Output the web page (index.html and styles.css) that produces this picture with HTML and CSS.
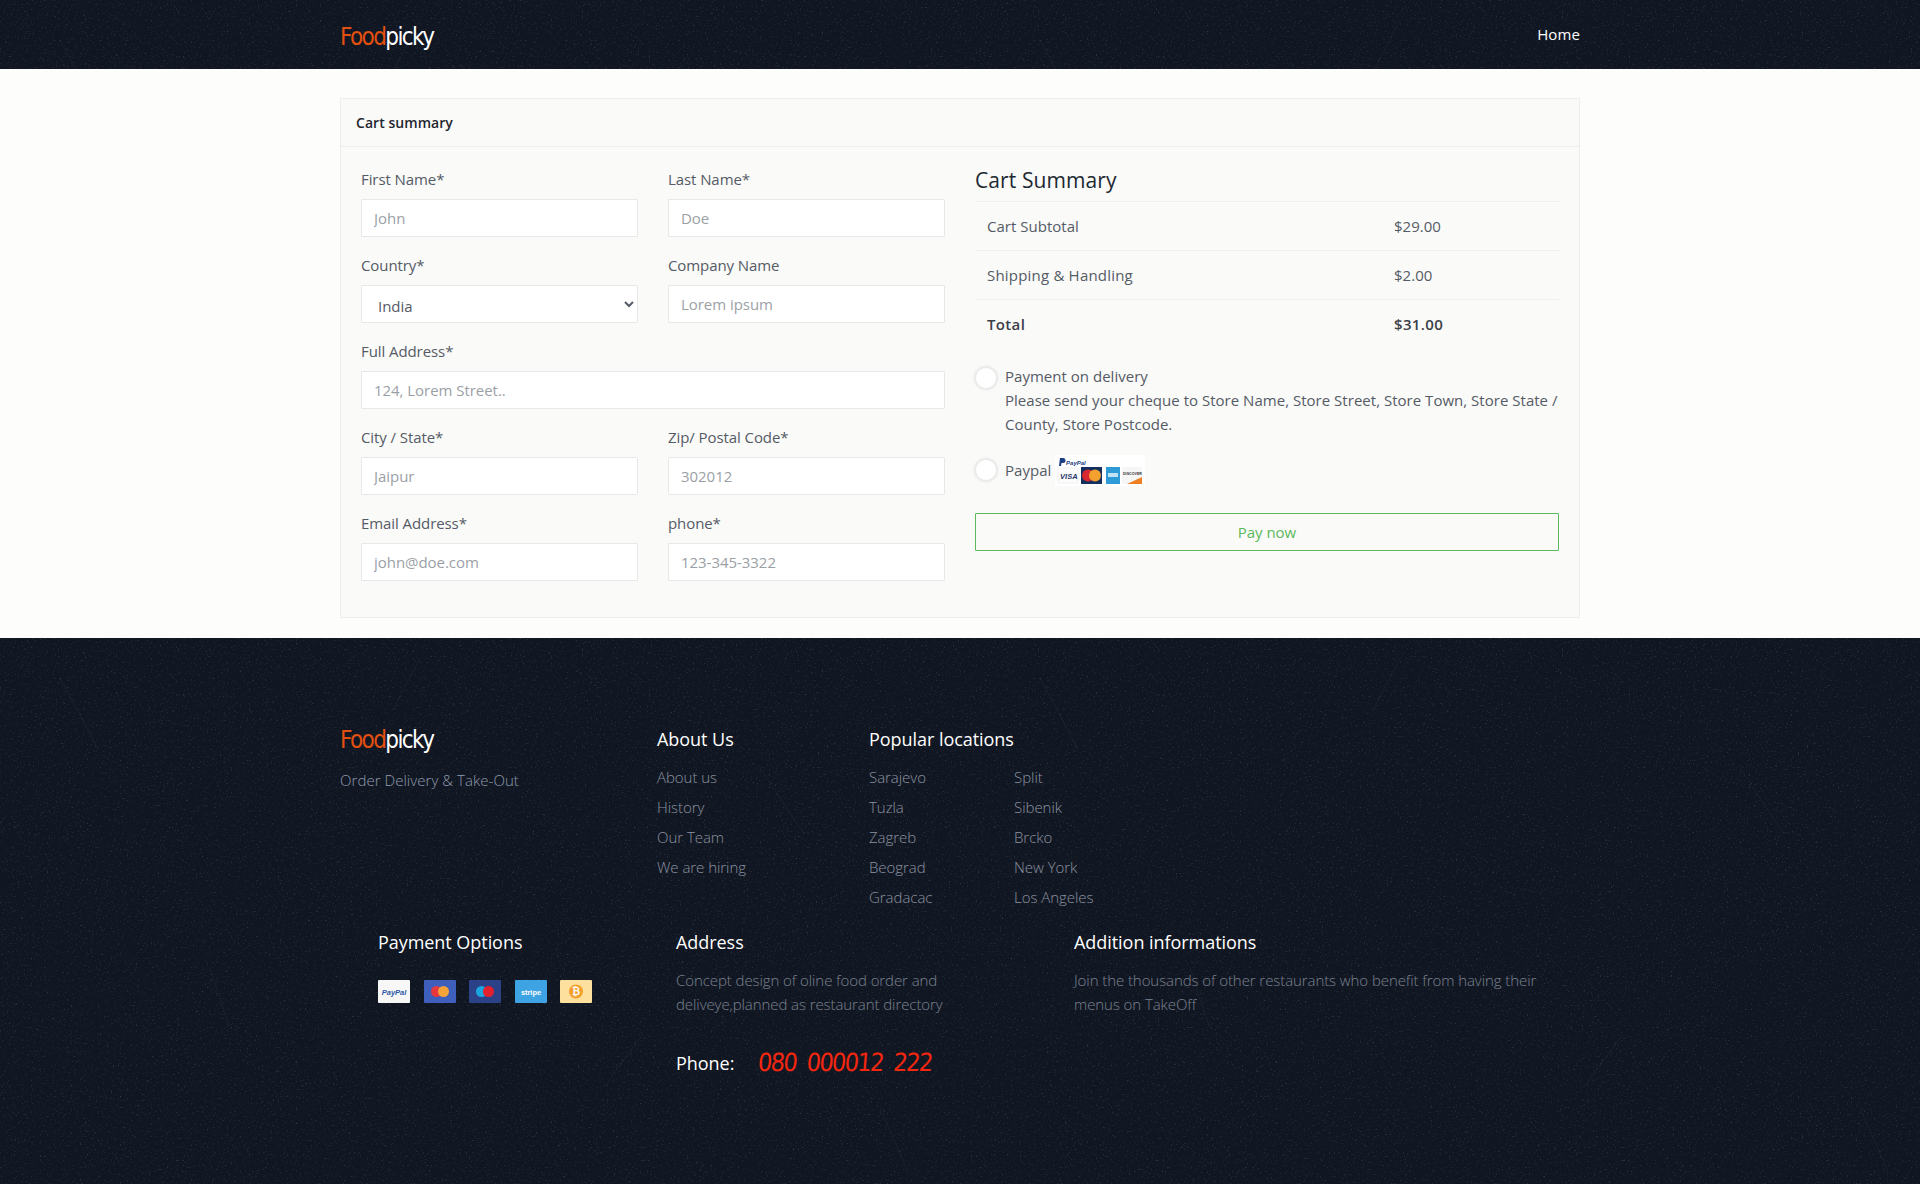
FILE: index.html
```html
<!DOCTYPE html>
<html lang="en">
    <head>
        <meta charset="UTF-8" />
        <meta name="viewport" content="width=device-width, initial-scale=1.0" />
        <title>Foodpicky - Checkout</title>
        <link rel="stylesheet" href="styles.css">
    </head>
    <body>
        <header class="top-bar dark">
            <div class="container top-row">
                <a class="logo" href="#"><span class="logo-food">Food</span><span class="logo-picky">picky</span></a>
                <a class="nav-link" href="#">Home</a>
            </div>
        </header>

        <main class="main">
            <div class="container">
                <div class="card">
                    <div class="card-header">Cart summary</div>
                    <div class="card-body">
                        <form class="form-grid">
                            <div class="field">
                                <label>First Name*</label>
                                <input type="text" placeholder="John">
                            </div>
                            <div class="field">
                                <label>Last Name*</label>
                                <input type="text" placeholder="Doe">
                            </div>
                            <div class="field">
                                <label>Country*</label>
                                <select>
                                    <option>India</option>
                                </select>
                            </div>
                            <div class="field">
                                <label>Company Name</label>
                                <input type="text" placeholder="Lorem ipsum">
                            </div>
                            <div class="field field-wide">
                                <label>Full Address*</label>
                                <input type="text" placeholder="124, Lorem Street..">
                            </div>
                            <div class="field">
                                <label>City / State*</label>
                                <input type="text" placeholder="Jaipur">
                            </div>
                            <div class="field">
                                <label>Zip/ Postal Code*</label>
                                <input type="text" placeholder="302012">
                            </div>
                            <div class="field">
                                <label>Email Address*</label>
                                <input type="text" placeholder="john@doe.com">
                            </div>
                            <div class="field">
                                <label>phone*</label>
                                <input type="text" placeholder="123-345-3322">
                            </div>
                        </form>

                        <div class="summary">
                            <h3 class="summary-title">Cart Summary</h3>
                            <table class="summary-table">
                                <tr>
                                    <td>Cart Subtotal</td>
                                    <td>$29.00</td>
                                </tr>
                                <tr>
                                    <td>Shipping &amp; Handling</td>
                                    <td>$2.00</td>
                                </tr>
                                <tr class="total">
                                    <td>Total</td>
                                    <td>$31.00</td>
                                </tr>
                            </table>

                            <div class="pay-option pay-delivery">
                                <span class="radio"></span>
                                <p>Payment on delivery<br>Please send your cheque to Store Name, Store Street, Store Town, Store State / County, Store Postcode.</p>
                            </div>
                            <div class="pay-option pay-paypal">
                                <span class="radio"></span>
                                <span>Paypal</span>
                                <svg class="paypal-cards" width="90" height="31" viewBox="0 0 90 31">
                                    <rect width="90" height="31" fill="#fff"/>
                                    <path d="M5 3h3a2 2 0 0 1 0 5H6.500L6 11H4z" fill="#1b3d84"/>
                                    <text x="11" y="9.500" class="pp-small">PayPal</text>
                                    <rect x="3" y="13" width="20" height="15" fill="#fdfdfd" stroke="#e2e2e2" stroke-width=".5"/>
                                    <text x="5" y="24" class="pp-visa">VISA</text>
                                    <rect x="26" y="12" width="21" height="17" fill="#15305f"/>
                                    <circle cx="33" cy="20.500" r="6" fill="#d9282f"/>
                                    <circle cx="40" cy="20.500" r="6" fill="#f3a02f"/>
                                    <rect x="51" y="12" width="14" height="17" fill="#2f9bd6"/>
                                    <rect x="53" y="18" width="10" height="4" fill="#bfe3f5"/>
                                    <rect x="67" y="12" width="20" height="17" fill="#f6f6f6"/>
                                    <text x="68" y="20" class="pp-disc">DISCOVER</text>
                                    <path d="M72 29 L87 22 V29 Z" fill="#ee7f22"/>
                                </svg>
                            </div>
                            <button class="pay-button" type="button">Pay now</button>
                        </div>
                    </div>
                </div>
            </div>
        </main>

        <footer class="footer dark">
            <div class="container">
                <div class="footer-row">
                    <div class="footer-brand">
                        <a class="logo" href="#"><span class="logo-food">Food</span><span class="logo-picky">picky</span></a>
                        <p class="tagline">Order Delivery &amp; Take-Out</p>
                    </div>
                    <div class="footer-about">
                        <h5>About Us</h5>
                        <ul>
                            <li><a href="#">About us</a></li>
                            <li><a href="#">History</a></li>
                            <li><a href="#">Our Team</a></li>
                            <li><a href="#">We are hiring</a></li>
                        </ul>
                    </div>
                    <div class="footer-places">
                        <h5>Popular locations</h5>
                        <div class="places-cols">
                            <ul>
                                <li><a href="#">Sarajevo</a></li>
                                <li><a href="#">Tuzla</a></li>
                                <li><a href="#">Zagreb</a></li>
                                <li><a href="#">Beograd</a></li>
                                <li><a href="#">Gradacac</a></li>
                            </ul>
                            <ul>
                                <li><a href="#">Split</a></li>
                                <li><a href="#">Sibenik</a></li>
                                <li><a href="#">Brcko</a></li>
                                <li><a href="#">New York</a></li>
                                <li><a href="#">Los Angeles</a></li>
                            </ul>
                        </div>
                    </div>
                </div>

                <div class="footer-row footer-second">
                    <div class="footer-pay">
                        <h5>Payment Options</h5>
                        <div class="pay-icons">
                            <svg width="32" height="23" viewBox="0 0 32 23">
                                <rect width="32" height="23" rx="1" fill="#f7f7f7"/>
                                <text x="16" y="14.500" class="ic-paypal">PayPal</text>
                            </svg>
                            <svg width="32" height="23" viewBox="0 0 32 23">
                                <rect width="32" height="23" rx="1" fill="#3f5fbd"/>
                                <circle cx="12.500" cy="11.500" r="5.500" fill="#e7383f"/>
                                <circle cx="19.500" cy="11.500" r="5.500" fill="#f6a339"/>
                            </svg>
                            <svg width="32" height="23" viewBox="0 0 32 23">
                                <rect width="32" height="23" rx="1" fill="#2c4288"/>
                                <circle cx="12.500" cy="11.500" r="5.500" fill="#1ba6e2"/>
                                <circle cx="19.500" cy="11.500" r="5.500" fill="#e4202d"/>
                            </svg>
                            <svg width="32" height="23" viewBox="0 0 32 23">
                                <rect width="32" height="23" rx="1" fill="#3ea3e3"/>
                                <text x="16" y="14.500" class="ic-stripe">stripe</text>
                            </svg>
                            <svg width="32" height="23" viewBox="0 0 32 23">
                                <rect width="32" height="23" rx="1" fill="#fddf9e"/>
                                <circle cx="16" cy="11.500" r="7" fill="#f5a02c"/>
                                <text x="16" y="15" class="ic-btc">₿</text>
                            </svg>
                        </div>
                    </div>
                    <div class="footer-address">
                        <h5>Address</h5>
                        <p>Concept design of oline food order and deliveye,planned as restaurant directory</p>
                        <div class="phone">
                            <span class="phone-label">Phone:</span>
                            <span class="phone-number">080 000012 222</span>
                        </div>
                    </div>
                    <div class="footer-info">
                        <h5>Addition informations</h5>
                        <p>Join the thousands of other restaurants who benefit from having their menus on TakeOff</p>
                    </div>
                </div>
            </div>
        </footer>
    </body>
</html>
```

FILE: styles.css
```css
* {
    box-sizing: border-box;
}
body {
    margin: 0;
    font-family: "Open Sans", "Noto Sans", sans-serif;
    font-size: 15px;
    line-height: 24px;
    letter-spacing: -0.04px;
    color: #555b66;
    background-color: #fdfdfb;
}
a {
    text-decoration: none;
    color: inherit;
}
ul {
    list-style: none;
    margin: 0;
    padding: 0;
}
p {
    margin: 0;
}
.container {
    width: 1240px;
    margin: 0 auto;
}

/* dark textured bars */
.dark {
    background-color: #111722;
    background-image: url("data:image/svg+xml,%3Csvg xmlns='http://www.w3.org/2000/svg' width='980' height='620'%3E%3Cfilter id='n'%3E%3CfeTurbulence type='fractalNoise' baseFrequency='.55' numOctaves='4' seed='11'/%3E%3CfeColorMatrix values='0 0 0 0 1 0 0 0 0 1 0 0 0 0 1 0 0 0 4 -2.5'/%3E%3C/filter%3E%3Crect width='980' height='620' filter='url(%23n)' opacity='.12'/%3E%3Cg stroke='%23fff' stroke-opacity='.035' fill='none'%3E%3Cpath d='M60 40l38 71M420 20l-27 52M760 130l44 66M210 330l19 58M640 400l-36 49M880 470l27 61'/%3E%3C/g%3E%3C/svg%3E");
}

/* header */
.top-bar {
    height: 69px;
}
.top-row {
    display: flex;
    justify-content: space-between;
    align-items: center;
    height: 69px;
}
.logo {
    display: block;
    width: 93px;
    height: 26px;
    line-height: 26px;
    font-family: "DejaVu Sans Condensed", "DejaVu Sans", sans-serif;
    font-size: 24px;
    letter-spacing: -1.6px;
    white-space: nowrap;
}
.top-row .logo {
    margin-top: 4px;
}
.logo-food {
    color: #e4500f;
}
.logo-picky {
    color: #fff;
}
.nav-link {
    margin-top: -1px;
    color: #fff;
    font-size: 15px;
    font-weight: 500;
    letter-spacing: 0.1px;
}

/* main card */
.main {
    padding: 29px 0 20px 0;
}
.card {
    border: 1px solid #eeeeec;
    background-color: #fafaf8;
}
.card-header {
    height: 48px;
    padding: 0 15px;
    border-bottom: 1px solid #eeeeec;
    font-size: 14px;
    font-weight: 600;
    line-height: 47px;
    letter-spacing: 0.05px;
    color: #1f2630;
}
.card-body {
    display: flex;
    gap: 30px;
    padding: 20px 20px 20px 20px;
}
.form-grid {
    display: grid;
    grid-template-columns: 1fr 1fr;
    column-gap: 30px;
    width: 584px;
}
.field {
    height: 86px;
}
.field-wide {
    grid-column: 1 / 3;
}
.field label {
    display: block;
    margin-bottom: 8px;
    height: 24px;
    letter-spacing: -0.08px;
}
.field input,
.field select {
    display: block;
    width: 100%;
    height: 38px;
    padding: 0 12px;
    border: 1px solid #e8e8e8;
    border-radius: 1px;
    background-color: #fff;
    font-family: inherit;
    font-size: 15px;
    letter-spacing: -0.04px;
    color: #555b66;
}
.field select {
    padding-top: 3px;
}
.field input::placeholder {
    color: #9b9fa6;
    opacity: 1;
}

/* summary column */
.summary {
    width: 584px;
    letter-spacing: 0.02px;
}
.summary-title {
    margin: 0;
    height: 34px;
    font-size: 21px;
    font-weight: 400;
    line-height: 26px;
    letter-spacing: 0.1px;
    color: #212832;
}
.summary-table {
    width: 100%;
    border-collapse: collapse;
}
.summary-table td {
    height: 49px;
    padding: 0 12px;
    border-top: 1px solid #eeeff0;
}
.summary-table tr:nth-child(2) td:first-child {
    letter-spacing: 0.2px;
}
.summary-table td:first-child {
    width: 407px;
}
.total td {
    font-weight: 600;
    letter-spacing: 0.35px;
    color: #3b4049;
}
.pay-option {
    display: flex;
    gap: 8px;
}
.pay-delivery {
    margin-top: 15px;
}
.pay-delivery .radio {
    margin-top: 3px;
}
.pay-paypal {
    align-items: center;
    margin-top: 19px;
}
.radio {
    flex: none;
    width: 22px;
    height: 22px;
    border: 1px solid #ececec;
    border-radius: 50%;
    background-color: #fff;
    box-shadow: 0 0 2px 1px #e6e6e6;
}
.paypal-cards {
    margin-left: -4px;
}
.pp-small {
    font: italic 700 6px "Liberation Sans", sans-serif;
    fill: #1b3d84;
}
.pp-visa {
    font: italic 700 7.5px "Liberation Sans", sans-serif;
    fill: #27346a;
}
.pp-disc {
    font: 700 3.6px "Liberation Sans", sans-serif;
    fill: #333;
}
.pay-button {
    display: block;
    width: 100%;
    height: 38px;
    margin-top: 27px;
    border: 1px solid #5cb85c;
    border-radius: 1px;
    background: transparent;
    font-family: inherit;
    font-size: 15px;
    letter-spacing: -0.04px;
    color: #5cb85c;
}

/* footer */
.footer {
    height: 546px;
    padding-top: 89px;
    font-weight: 300;
    color: #8b92a1;
}
.footer h5 {
    margin: 0;
    height: 26px;
    font-size: 18px;
    font-weight: 400;
    line-height: 25px;
    letter-spacing: -0.05px;
    color: #fff;
}
.footer-row {
    display: flex;
}
.footer-brand {
    width: 317px;
}
.tagline {
    margin-top: 15px;
    color: #8f99ae;
    letter-spacing: 0.05px;
}
.footer-about {
    width: 212px;
}
.footer ul {
    margin-top: 9px;
}
.footer li {
    height: 30px;
    line-height: 30px;
}
.places-cols {
    display: flex;
}
.places-cols ul {
    width: 145px;
}
.footer-second {
    margin-top: 18px;
    padding-left: 38px;
}
.footer-pay {
    width: 298px;
}
.pay-icons {
    display: flex;
    gap: 13.5px;
    margin-top: 24px;
}
.ic-paypal {
    font: italic 700 7.5px "Liberation Sans", sans-serif;
    fill: #2f5aa8;
    text-anchor: middle;
}
.ic-stripe {
    font: 700 7.5px "Liberation Sans", sans-serif;
    fill: #fff;
    text-anchor: middle;
}
.ic-btc {
    font: 700 10px "DejaVu Sans", sans-serif;
    fill: #fff;
    text-anchor: middle;
}
.footer-address {
    width: 398px;
}
.footer-address p,
.footer-info p {
    margin-top: 12px;
    color: #7b8292;
    letter-spacing: -0.08px;
}
.footer-address p {
    width: 290px;
}
.footer-info {
    flex: 1;
}
.footer-info p {
    width: 480px;
}
.phone {
    display: flex;
    align-items: center;
    height: 32px;
    margin-top: 31px;
}
.phone-label {
    width: 82px;
    font-size: 18px;
    font-weight: 400;
    color: #fff;
}
.phone-number {
    display: inline-block;
    font-family: "DejaVu Sans Condensed", "DejaVu Sans", sans-serif;
    font-size: 25px;
    letter-spacing: -1.6px;
    word-spacing: 5px;
    color: #f5260f;
    white-space: nowrap;
    transform: skewX(-5deg);
}
```
